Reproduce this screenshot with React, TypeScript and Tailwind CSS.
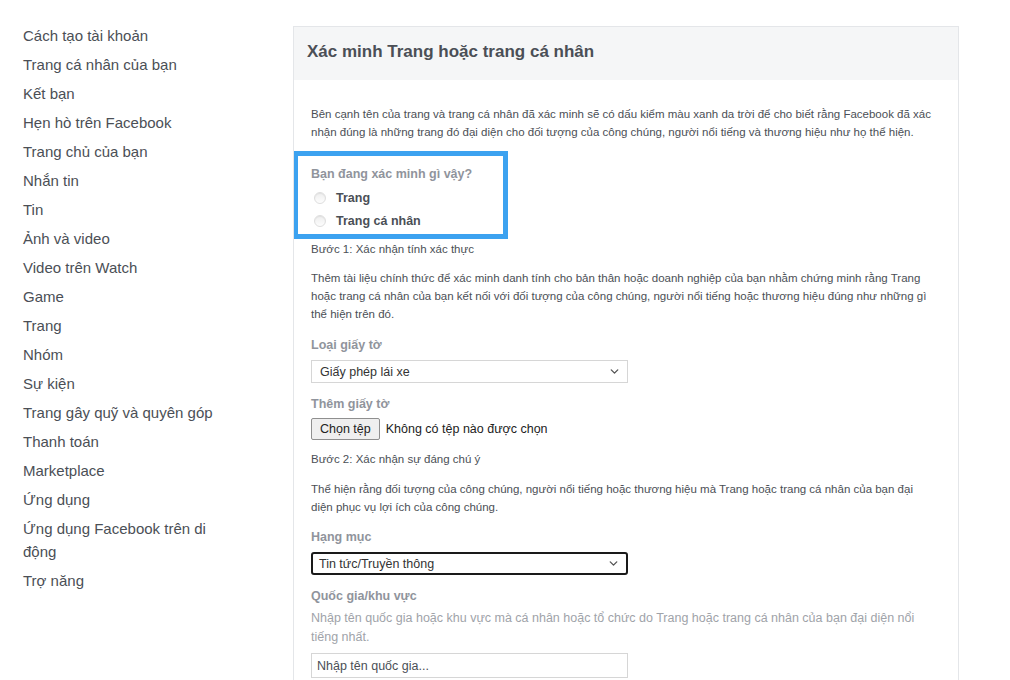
import { ChevronDown } from "lucide-react"

const menu = [
  "Cách tạo tài khoản",
  "Trang cá nhân của bạn",
  "Kết bạn",
  "Hẹn hò trên Facebook",
  "Trang chủ của bạn",
  "Nhắn tin",
  "Tin",
  "Ảnh và video",
  "Video trên Watch",
  "Game",
  "Trang",
  "Nhóm",
  "Sự kiện",
  "Trang gây quỹ và quyên góp",
  "Thanh toán",
  "Marketplace",
  "Ứng dụng",
  "Ứng dụng Facebook trên di động",
  "Trợ năng",
]

function FakeSelect({ value, focused }: { value: string; focused?: boolean }) {
  return (
    <div
      className={`flex h-[23px] w-[317px] items-center justify-between bg-white pr-[6px] text-[12.5px] text-[#333] ${
        focused ? "rounded-[3px] border-2 border-[#1a1a1a] pl-[6px]" : "border border-[#d6d6d6] pl-[8px]"
      }`}
    >
      <span>{value}</span>
      <ChevronDown className="h-[13px] w-[13px] text-[#555]" strokeWidth={2.5} />
    </div>
  )
}

function Radio({ label }: { label: string }) {
  return (
    <div className="flex h-[23px] items-center gap-[10px] pl-[3px]">
      <span className="h-[12px] w-[12px] rounded-full border border-[#dedede] bg-gradient-to-b from-[#eeeeee] to-[#fdfdfd] shadow-[inset_0_1px_1px_rgba(0,0,0,0.06)]" />
      <span className="text-[12.5px] font-bold text-[#4b4f56]">{label}</span>
    </div>
  )
}

export default function App() {
  return (
    <div
      className="flex min-h-[680px] w-[1010px] bg-white"
      style={{ fontFamily: '"Liberation Sans", Arial, sans-serif' }}
    >
      <aside className="w-[293px] shrink-0 pl-[23px] pt-[21px]">
        <ul className="w-[215px]">
          {menu.map((item) => (
            <li key={item} className="py-[3px] text-[15px] leading-[23px] text-[#4b4f56]">
              {item}
            </li>
          ))}
        </ul>
      </aside>

      <main className="mt-[26px] h-[654px] w-[666px] overflow-hidden border border-b-0 border-[#e4e6e9]">
        <div className="flex h-[53px] items-center bg-[#f5f6f7] pb-[3px] pl-[13px] text-[17px] font-bold text-[#4b4f56]">
          Xác minh Trang hoặc trang cá nhân
        </div>

        <div className="pl-[17px] pr-[10px] pt-[25px] text-[11.5px] leading-[18px] text-[#4b4f56]">
          <p>
            Bên cạnh tên của trang và trang cá nhân đã xác minh sẽ có dấu kiểm màu xanh da trời để cho biết rằng Facebook đã xác
            <br />
            nhận đúng là những trang đó đại diện cho đối tượng của công chúng, người nổi tiếng và thương hiệu như họ thể hiện.
          </p>

          <div className="relative z-10 -ml-[18px] mt-[10px] h-[88px] w-[215px] border-[5px] border-[#3ca2f0] bg-white pl-[13px] pt-[9px]">
            <p className="text-[12.5px] font-bold text-[#90949c]">Bạn đang xác minh gì vậy?</p>
            <div className="mt-[3px]">
              <Radio label="Trang" />
              <Radio label="Trang cá nhân" />
            </div>
          </div>

          <p className="mt-[1px]">Bước 1: Xác nhận tính xác thực</p>

          <p className="mt-[11px]">
            Thêm tài liệu chính thức để xác minh danh tính cho bản thân hoặc doanh nghiệp của bạn nhằm chứng minh rằng Trang
            <br />
            hoặc trang cá nhân của bạn kết nối với đối tượng của công chúng, người nổi tiếng hoặc thương hiệu đúng như những gì
            <br />
            thể hiện trên đó.
          </p>

          <p className="mt-[13px] text-[12.5px] font-bold text-[#90949c]">Loại giấy tờ</p>
          <div className="mt-[6px]">
            <FakeSelect value="Giấy phép lái xe" />
          </div>

          <p className="mt-[12px] text-[12.5px] font-bold text-[#90949c]">Thêm giấy tờ</p>
          <div className="mt-[5px] flex items-center gap-[6px] text-[12.5px] text-[#222]">
            <span className="flex h-[22px] items-center rounded-[2px] border border-[#8f8f8f] bg-[#efefef] px-[8px]">
              Chọn tệp
            </span>
            <span>Không có tệp nào được chọn</span>
          </div>

          <p className="mt-[10px]">Bước 2: Xác nhận sự đáng chú ý</p>

          <p className="mt-[12px]">
            Thể hiện rằng đối tượng của công chúng, người nổi tiếng hoặc thương hiệu mà Trang hoặc trang cá nhân của bạn đại
            <br />
            diện phục vụ lợi ích của công chúng.
          </p>

          <p className="mt-[12px] text-[12.5px] font-bold text-[#90949c]">Hạng mục</p>
          <div className="mt-[6px]">
            <FakeSelect value="Tin tức/Truyền thông" focused />
          </div>

          <p className="mt-[12px] text-[12.5px] font-bold text-[#90949c]">Quốc gia/khu vực</p>
          <p className="mt-[4px] text-[12.5px] leading-[19px] text-[#a0a3a9]">
            Nhập tên quốc gia hoặc khu vực mà cá nhân hoặc tổ chức do Trang hoặc trang cá nhân của bạn đại diện nổi
            <br />
            tiếng nhất.
          </p>
          <div className="mt-[6px] flex h-[25px] w-[317px] items-center border border-[#d6d6d6] pl-[5px] text-[12.5px] text-[#4b4f56]">
            Nhập tên quốc gia...
          </div>
        </div>
      </main>
    </div>
  )
}
